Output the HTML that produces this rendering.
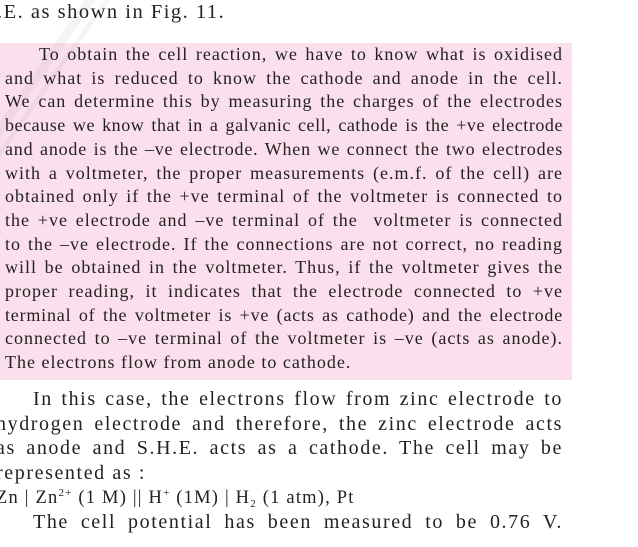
<!DOCTYPE html>
<html><head><meta charset="utf-8"><style>
body{margin:0;width:638px;height:547px;background:#fff;overflow:hidden;position:relative;font-family:"Liberation Serif",serif;color:#222}
.l{position:absolute;white-space:nowrap;text-align:justify;text-align-last:justify}
.box{position:absolute;left:0;top:43px;width:572px;height:337px;background:#fbdfec}
.b{font-size:18px;letter-spacing:1px;left:5px;width:558px}
.m{font-size:20px;letter-spacing:1.6px;left:-4px;width:567px}
sup{font-size:11px;vertical-align:7px;line-height:0}
sub{font-size:11px;vertical-align:-4px;line-height:0}
.wm{position:absolute;background:rgba(150,150,150,0.10);transform:rotate(-55deg);transform-origin:0 0}
</style></head><body>
<div class="box"></div>
<div class="wm" style="left:-20px;top:150px;width:220px;height:9px"></div>
<div class="wm" style="left:-8px;top:160px;width:220px;height:5px"></div>
<div class="l" style="font-size:20.5px;letter-spacing:1.5px;left:-3px;top:1px;text-align-last:left">.E. as shown in Fig. 11.</div>
<div class="l b" style="top:44px;left:39px;width:524px">To obtain the cell reaction, we have to know what is oxidised</div>
<div class="l b" style="top:67.7px">and what is reduced to know the cathode and anode in the cell.</div>
<div class="l b" style="top:91.4px">We can determine this by measuring the charges of the electrodes</div>
<div class="l b" style="top:115px;letter-spacing:0.55px">because we know that in a galvanic cell, cathode is the +ve electrode</div>
<div class="l b" style="top:138.8px;letter-spacing:0.8px">and anode is the –ve electrode. When we connect the two electrodes</div>
<div class="l b" style="top:162.5px">with a voltmeter, the proper measurements (e.m.f. of the cell) are</div>
<div class="l b" style="top:186.2px">obtained only if the +ve terminal of the voltmeter is connected to</div>
<div class="l b" style="top:209.9px">the +ve electrode and –ve terminal of the &nbsp;voltmeter is connected</div>
<div class="l b" style="top:233.6px">to the –ve electrode. If the connections are not correct, no reading</div>
<div class="l b" style="top:257.3px">will be obtained in the voltmeter. Thus, if the voltmeter gives the</div>
<div class="l b" style="top:281px">proper reading, it indicates that the electrode connected to +ve</div>
<div class="l b" style="top:304.7px;letter-spacing:0.8px">terminal of the voltmeter is +ve (acts as cathode) and the electrode</div>
<div class="l b" style="top:328.4px">connected to –ve terminal of the voltmeter is –ve (acts as anode).</div>
<div class="l b" style="top:352px;text-align-last:left">The electrons flow from anode to cathode.</div>
<div class="l m" style="top:388px;left:33px;width:530px">In this case, the electrons flow from zinc electrode to</div>
<div class="l m" style="top:412.5px">hydrogen electrode and therefore, the zinc electrode acts</div>
<div class="l m" style="top:437px">as anode and S.H.E. acts as a cathode. The cell may be</div>
<div class="l m" style="top:461.5px;text-align-last:left">represented as :</div>
<div class="l" style="font-size:18.5px;letter-spacing:1.2px;left:-4px;top:488px;text-align-last:left">Zn | Zn<sup>2+</sup> (1 M) || H<sup>+</sup> (1M) | H<sub>2</sub> (1 atm), Pt</div>
<div class="l m" style="top:511px;left:33px;width:530px">The cell potential has been measured to be 0.76 V.</div>
</body></html>
